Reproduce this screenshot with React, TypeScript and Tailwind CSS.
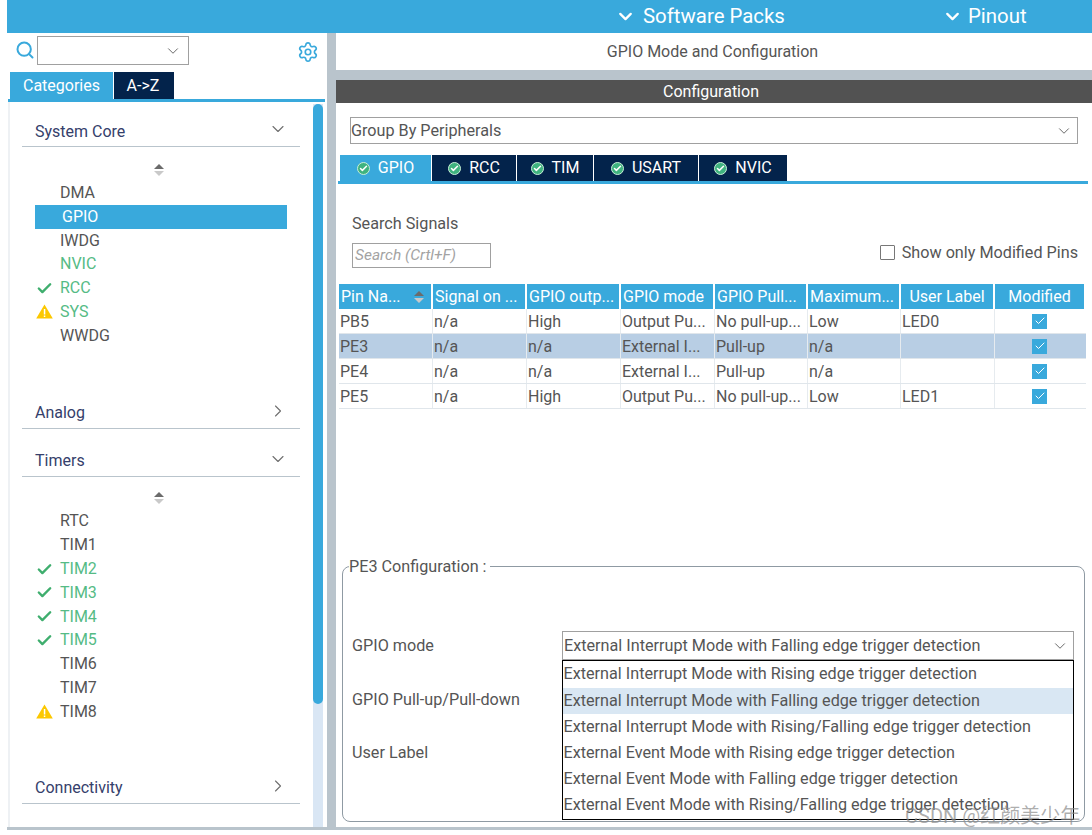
import React from "react";
import { ChevronDown, ChevronRight, Check, Search, Settings } from "lucide-react";

const BLUE = "bg-[#39a9dc]";

const Sorter = () => (
  <svg width="12" height="14" viewBox="0 0 12 14">
    <path d="M6 1 L11 6 H1 Z" fill="#6b6b6b" />
    <path d="M6 13 L11 8 H1 Z" fill="#c9c9c9" />
  </svg>
);

const Warn = () => (
  <svg width="17" height="15" viewBox="0 0 17 15">
    <path d="M8.5 0.5 L16.8 14.5 H0.2 Z" fill="#fcc800" />
    <rect x="7.8" y="5" width="1.5" height="5.5" fill="#fff" />
    <rect x="7.8" y="11.5" width="1.5" height="1.5" fill="#fff" />
  </svg>
);

const TabCheck = () => (
  <span className="w-[13px] h-[13px] rounded-full bg-[#3fb37f] flex items-center justify-center shrink-0 border border-[#c8efd8]">
    <Check size={9} strokeWidth={4} color="#fff" />
  </span>
);

type Item = { name: string; status?: "ok" | "warn"; green?: boolean };

const coreItems: Item[] = [
  { name: "DMA" },
  { name: "GPIO" },
  { name: "IWDG" },
  { name: "NVIC", green: true },
  { name: "RCC", status: "ok", green: true },
  { name: "SYS", status: "warn", green: true },
  { name: "WWDG" },
];

const timerItems: Item[] = [
  { name: "RTC" },
  { name: "TIM1" },
  { name: "TIM2", status: "ok", green: true },
  { name: "TIM3", status: "ok", green: true },
  { name: "TIM4", status: "ok", green: true },
  { name: "TIM5", status: "ok", green: true },
  { name: "TIM6" },
  { name: "TIM7" },
  { name: "TIM8", status: "warn" },
];

const SectionHead = ({ title, open, className }: { title: string; open?: boolean; className: string }) => (
  <div className={`flex items-center justify-between w-[278px] h-[26px] ml-[12px] border-b border-[#b9c4cc] pl-[13px] pr-[14px] pb-[4px] text-[16px] text-[#35406b] ${className}`}>
    <span>{title}</span>
    {open ? (
      <ChevronDown size={20} strokeWidth={1.3} color="#6e6e6e" className="-mt-[5px] -mr-[2px]" />
    ) : (
      <ChevronRight size={20} strokeWidth={1.3} color="#6e6e6e" className="-mt-[5px] -mr-[2px]" />
    )}
  </div>
);

const TreeRow = ({ item, selected }: { item: Item; selected?: boolean }) => (
  <div
    className={`flex items-center h-[23.8px] ml-[25px] w-[252px] text-[16px] ${
      selected ? `${BLUE} text-white` : item.green ? "text-[#55bb85]" : "text-[#555]"
    }`}
  >
    <span className="w-[25px] shrink-0 flex justify-start pl-[1px]">
      {item.status === "ok" && <Check size={17} strokeWidth={3.4} color="#3fae6e" />}
      {item.status === "warn" && <Warn />}
    </span>
    <span className={selected ? "pl-[2px]" : ""}>{item.name}</span>
  </div>
);

const columns = ["Pin Na...", "Signal on ...", "GPIO outp...", "GPIO mode", "GPIO Pull...", "Maximum...", "User Label", "Modified"];

const rows = [
  ["PB5", "n/a", "High", "Output Pu...", "No pull-up...", "Low", "LED0"],
  ["PE3", "n/a", "n/a", "External I...", "Pull-up", "n/a", ""],
  ["PE4", "n/a", "n/a", "External I...", "Pull-up", "n/a", ""],
  ["PE5", "n/a", "High", "Output Pu...", "No pull-up...", "Low", "LED1"],
];

const gridCols = "grid grid-cols-[94px_94px_94px_94px_93px_93px_94px_91px]";

const tabs = ["GPIO", "RCC", "TIM", "USART", "NVIC"];
const tabWidths = ["w-[91px]", "w-[84px]", "w-[76px]", "w-[104px]", "w-[88px]"];

const options = [
  "External Interrupt Mode with Rising edge trigger detection",
  "External Interrupt Mode with Falling edge trigger detection",
  "External Interrupt Mode with Rising/Falling edge trigger detection",
  "External Event Mode with Rising edge trigger detection",
  "External Event Mode with Falling edge trigger detection",
  "External Event Mode with Rising/Falling edge trigger detection",
];

export default function App() {
  return (
    <div className="relative w-[1092px] h-[835px] overflow-hidden bg-white font-['Roboto',sans-serif] text-[#555]">
      <div className="ml-[7px] h-[830px] flex flex-col border-b-[3px] border-[#b9c4cc]">
        {/* top bar */}
        <div className={`${BLUE} h-[33px] shrink-0 flex items-center text-white text-[20.4px] pl-[608px]`}>
          <ChevronDown size={21} strokeWidth={2.6} />
          <span className="ml-[7px] w-[300px]">Software Packs</span>
          <ChevronDown size={21} strokeWidth={2.6} className="-ml-[1px]" />
          <span className="ml-[5px]">Pinout</span>
        </div>

        <div className="flex flex-1 min-h-0">
          {/* left panel */}
          <div className="w-[320px] shrink-0 flex flex-col">
            <div className="h-[39px] flex items-start pt-[3px] pl-[8px]">
              <Search size={20} strokeWidth={2.4} color="#39a9dc" className="mt-[4px] shrink-0" />
              <div className="ml-[2px] w-[152px] h-[29px] border-[1.5px] border-[#a0a0a0] flex items-center justify-end pr-[6px]">
                <ChevronDown size={18} strokeWidth={1.3} color="#666" />
              </div>
              <Settings size={22} strokeWidth={1.8} color="#39a9dc" className="ml-[108px] mt-[5px]" />
            </div>
            <div className="flex pl-[3px] gap-[1px] h-[27px] text-[16px] text-white">
              <div className={`${BLUE} w-[103px] flex items-center justify-center`}>Categories</div>
              <div className="bg-[#03234b] w-[60px] flex items-center justify-center pr-[2px]">A-&gt;Z</div>
            </div>
            <div className="h-[3px] bg-[#39a9dc] ml-[1px] mr-[2px] shrink-0" />
            <div className="flex-1 min-h-0 flex ml-[1px] border-l-2 border-[#eef1f4]">
              <div className="w-[303px] shrink-0">
                <SectionHead title="System Core" open className="mt-[19px]" />
                <div className="flex justify-center mt-[16px] mb-[1px] w-[298px]">
                  <Sorter />
                </div>
                <div className="mt-[4px]">
                  {coreItems.map((item) => (
                    <TreeRow key={item.name} item={item} selected={item.name === "GPIO"} />
                  ))}
                </div>
                <SectionHead title="Analog" className="mt-[55px]" />
                <SectionHead title="Timers" open className="mt-[22px]" />
                <div className="flex justify-center mt-[14px] mb-[5px] w-[298px]">
                  <Sorter />
                </div>
                <div className="mt-[4px]">
                  {timerItems.map((item) => (
                    <TreeRow key={item.name} item={item} />
                  ))}
                </div>
                <SectionHead title="Connectivity" className="mt-[54px]" />
              </div>
              <div className="w-[10px] shrink-0 bg-[#d9e6f4] mt-[2px]">
                <div className={`${BLUE} h-[600px] rounded-[5px]`} />
              </div>
            </div>
          </div>

          {/* divider */}
          <div className="w-[9px] shrink-0 bg-[#b9c4cc]" />

          {/* right panel */}
          <div className="flex-1 min-w-0 flex flex-col">
            <div className="h-[37px] shrink-0 flex items-center justify-center text-[16px] pr-[3px]">GPIO Mode and Configuration</div>
            <div className="h-[10px] shrink-0 bg-[#b9c4cc]" />
            <div className="h-[23px] shrink-0 bg-[#525252] text-white text-[16px] flex items-center justify-center pr-[6px]">Configuration</div>

            <div className="flex-1 min-h-0 flex flex-col pl-[2px] pr-[4px] text-[16.2px]">
              <div className="mt-[14px] ml-[12px] mr-[10px] h-[27px] pt-[1px] border-[1.5px] border-[#a0a0a0] flex items-center justify-between pr-[4px]">
                <span>Group By Peripherals</span>
                <ChevronDown size={18} strokeWidth={1.3} color="#666" />
              </div>

              <div className="flex gap-[1px] h-[26px] mt-[11px] ml-[2px] text-[16px] text-white">
                {tabs.map((tab, i) => (
                  <div
                    key={tab}
                    className={`${tabWidths[i]} ${i === 0 ? "bg-[#39a9dc]" : "bg-[#03234b]"} flex items-center justify-center gap-[8px]`}
                  >
                    <TabCheck />
                    <span>{tab}</span>
                  </div>
                ))}
              </div>
              <div className="h-[3px] bg-[#39a9dc] shrink-0" />

              <div className="flex justify-between items-end mt-[28px] ml-[14px] pr-[10px] h-[56px]">
                <div>
                  <div className="leading-[19px] mb-[10px]">Search Signals</div>
                  <div className="w-[139px] h-[25px] border-[1.5px] border-[#a0a0a0] flex items-center pl-[2px] italic text-[15.5px] text-[#a3a3a3]">
                    Search (Crtl+F)
                  </div>
                </div>
                <div className="flex items-center gap-[7px] mb-[3px]">
                  <span className="w-[15px] h-[15px] border border-[#777] bg-white rounded-[1px]" />
                  <span>Show only Modified Pins</span>
                </div>
              </div>

              {/* signals table */}
              <div className="mt-[16px] ml-[1px] w-[747px] text-[16px]">
                <div className={`${gridCols} h-[25px]`}>
                  {columns.map((col, i) => (
                    <div
                      key={col}
                      className={`${BLUE} text-white border-r-2 border-white flex items-center overflow-hidden whitespace-nowrap ${i >= 6 ? "justify-center" : "pl-[2px]"} ${i === 0 ? "justify-between pr-[6px]" : ""}`}
                    >
                      <span>{col}</span>
                      {i === 0 && <Sorter />}
                    </div>
                  ))}
                </div>
                {rows.map((row, r) => (
                  <div key={row[0]} className={`${gridCols} h-[25px] border-b ${r === 1 ? "bg-[#b8cee4]" : ""} border-[#e0e6eb]`}>
                    {row.map((cell, i) => (
                      <div key={i} className="border-r border-[#e6ebef] pl-[1px] pt-[2px] flex items-center whitespace-nowrap overflow-hidden">
                        {cell}
                      </div>
                    ))}
                    <div className="flex items-center justify-center pr-[2px]">
                      <span className={`${BLUE} w-[15px] h-[15px] flex items-center justify-center`}>
                        <Check size={12} strokeWidth={2} color="#fff" />
                      </span>
                    </div>
                  </div>
                ))}
              </div>

              {/* pin configuration */}
              <fieldset className="relative mt-[148px] ml-[4px] w-[743px] h-[265px] border border-[#8f9aa3] rounded-[8px] px-[9px]">
                <legend className="ml-[-3px] pr-[3px] leading-[19px]">PE3 Configuration :</legend>
                <div className="flex items-start mt-[55px]">
                  <div className="w-[210px] leading-[19px] pt-[5px]">
                    <div>GPIO mode</div>
                    <div className="mt-[35px]">GPIO Pull-up/Pull-down</div>
                    <div className="mt-[34px]">User Label</div>
                  </div>
                  <div className="relative w-[512px] h-[29px] pt-[1px] border-[1.5px] border-[#a0a0a0] flex items-center justify-between pl-[1px] pr-[4px]">
                    <span>External Interrupt Mode with Falling edge trigger detection</span>
                    <ChevronDown size={18} strokeWidth={1.3} color="#666" />
                    <div className="absolute left-[-1.5px] top-[27.5px] w-[512px] h-[160px] pt-[1px] bg-white border-[1.5px] border-black">
                      {options.map((opt, i) => (
                        <div key={opt} className={`h-[26.2px] flex items-center pl-[1px] whitespace-nowrap ${i === 1 ? "bg-[#d9e7f3]" : ""}`}>
                          {opt}
                        </div>
                      ))}
                    </div>
                  </div>
                </div>
              </fieldset>
            </div>
          </div>
        </div>
      </div>

      {/* watermark */}
      <div className="absolute left-[905px] top-[801px] text-[20px] text-[#8a8a8a]/70 whitespace-nowrap font-['Roboto','Noto_Sans_CJK_SC',sans-serif]">
        CSDN @红颜美少年
      </div>
    </div>
  );
}
